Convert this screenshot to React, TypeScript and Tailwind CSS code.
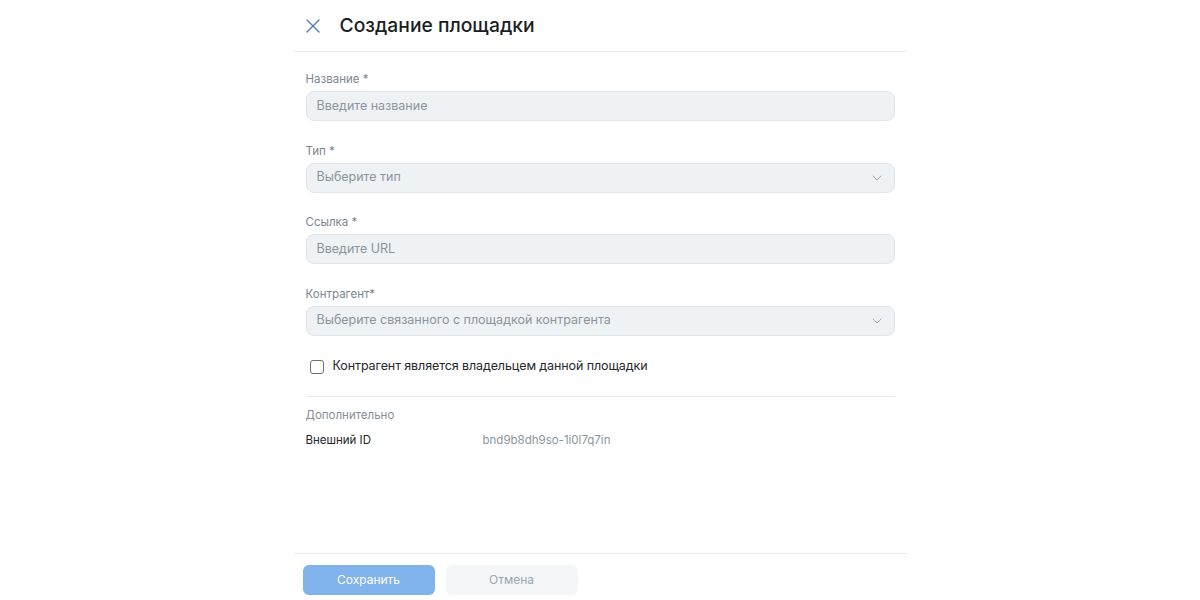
import { X, ChevronDown } from 'lucide-react'

function Field({ label, placeholder, select }: { label: string; placeholder: string; select?: boolean }) {
  return (
    <div className="flex flex-col">
      <label className="text-[11.5px] leading-4 text-[#7d858f] mb-[4px]">{label}</label>
      <div className="h-[30px] flex items-center justify-between rounded-lg border border-[#e0e5ea] bg-[#eff2f5] pl-[10px] pr-[9px]">
        <span className="text-[12.5px] text-[#8c949d]">{placeholder}</span>
        {select && <ChevronDown className="w-4 h-4 text-[#a3abb4]" strokeWidth={1.5} />}
      </div>
    </div>
  )
}

export default function App() {
  return (
    <div className="h-[600px] bg-white font-['Inter',sans-serif] flex justify-center">
      <div className="w-[613px] flex flex-col">
        <div className="h-[52px] flex items-center border-b border-[#e6e9ed] pl-[7px] shrink-0">
          <X className="w-6 h-6 text-[#4f7cae]" strokeWidth={1.4} />
          <h1 className="ml-[15px] text-[19.3px] text-[#1a1d21] font-medium">Создание площадки</h1>
        </div>

        <div className="flex-1 px-3 pt-[19px] flex flex-col">
          <div className="flex flex-col gap-[21.5px]">
            <Field label="Название *" placeholder="Введите название" />
            <Field label="Тип *" placeholder="Выберите тип" select />
            <Field label="Ссылка *" placeholder="Введите URL" />
            <Field label="Контрагент*" placeholder="Выберите связанного с площадкой контрагента" select />
          </div>

          <label className="h-5 flex items-center mt-[21px] pl-[4px]">
            <span className="w-[14px] h-[14px] rounded-[3px] border-[1.5px] border-[#6b7178] bg-white" />
            <span className="ml-[9px] text-[12.5px] tracking-[-0.1px] text-[#24282d]">Контрагент является владельцем данной площадки</span>
          </label>

          <div className="mt-[19px] border-t border-[#e6e9ed]" />

          <div className="mt-[10px] text-[11.5px] leading-4 text-[#868d96]">Дополнительно</div>
          <div className="mt-[9px] flex text-[11.5px] leading-4">
            <span className="w-[177px] text-[#22262b]">Внешний ID</span>
            <span className="text-[#8c949d]">bnd9b8dh9so-1i0l7q7in</span>
          </div>
        </div>

        <div className="border-t border-[#e6e9ed] pt-[11px] pb-[5px] pl-[9px] flex gap-[11px] shrink-0">
          <button className="w-[132px] h-[30px] rounded-md bg-[#80b2ec] text-white text-[12px]">Сохранить</button>
          <button className="w-[132px] h-[30px] rounded-md bg-[#f5f6f8] text-[#9aa6b6] text-[12px]">Отмена</button>
        </div>
      </div>
    </div>
  )
}
